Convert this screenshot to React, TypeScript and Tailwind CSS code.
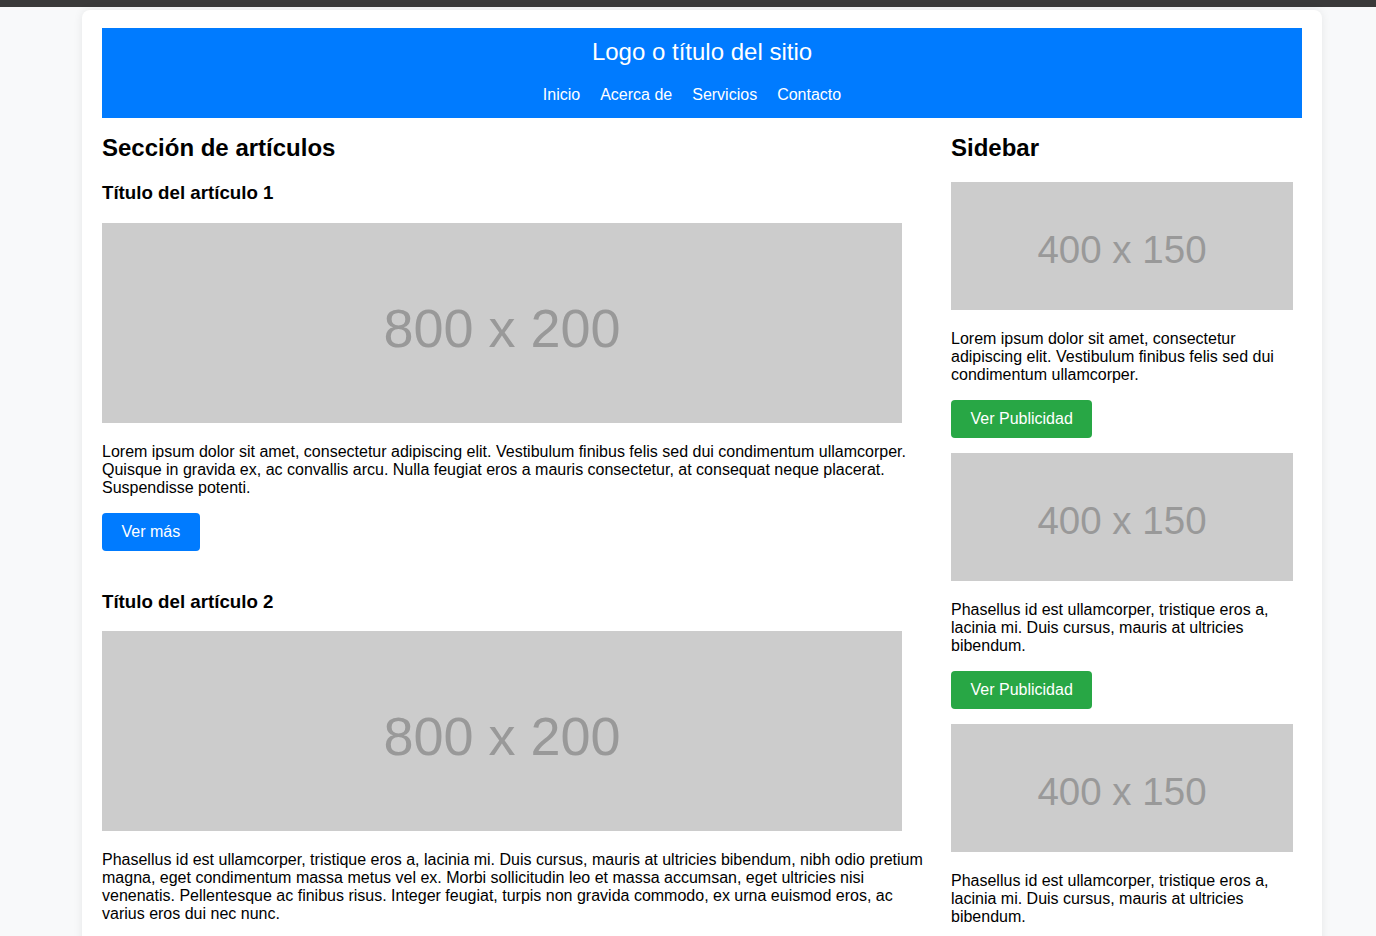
import React from "react";

function BigPh() {
  return (
    <div className="flex h-[200px] w-[800px] items-center justify-center bg-[#cccccc] text-[#999999]">
      <span className="pt-[10px] text-[54px] leading-none">800 x 200</span>
    </div>
  );
}

function SmallPh() {
  return (
    <div className="flex h-[128px] w-[342px] items-center justify-center bg-[#cccccc] text-[#999999]">
      <span className="pt-[8px] text-[38.5px] leading-none">400 x 150</span>
    </div>
  );
}

function Ad({ text, button = true }: { text: string; button?: boolean }) {
  return (
    <div>
      <SmallPh />
      <p className="mt-[20px] text-[16px] leading-[18px]">{text}</p>
      {button && (
        <button className="mt-4 rounded-[4px] bg-[#28a745] px-[19.5px] py-[10px] text-[16px] leading-[18px] text-white">
          Ver Publicidad
        </button>
      )}
    </div>
  );
}

export default function App() {
  const nav = ["Inicio", "Acerca de", "Servicios", "Contacto"];
  return (
    <div className="h-screen overflow-hidden bg-[#f8f9fa] font-['Liberation_Sans',Arial,sans-serif] text-black">
      <div className="h-[7px] bg-[#3a3a3a]" />
      <div className="ml-[82px] mt-[3px] w-[1240px] rounded-lg bg-white px-5 pt-[18px] pb-10 shadow-[0_0_10px_rgba(0,0,0,0.08)]">
        <header className="bg-[#007bff] pt-[10px] pb-[14px] text-center text-white">
          <h1 className="text-[24px] font-normal leading-[28px]">Logo o título del sitio</h1>
          <nav className="mt-5">
            <ul className="flex justify-center text-[16px] leading-[18px]">
              {nav.map((n) => (
                <li key={n} className="mr-5">
                  <a href="#">{n}</a>
                </li>
              ))}
            </ul>
          </nav>
        </header>

        <div className="mt-4 flex gap-[19px]">
          <main className="w-[830px]">
            <h2 className="text-[24px] font-bold leading-[28px]">Sección de artículos</h2>

            <article>
              <h3 className="mt-[20px] text-[18.72px] font-bold leading-[21px]">Título del artículo 1</h3>
              <div className="mt-[20px]">
                <BigPh />
              </div>
              <p className="mt-[20px] text-[16px] leading-[18px]">
                Lorem ipsum dolor sit amet, consectetur adipiscing elit. Vestibulum finibus felis sed dui condimentum ullamcorper. Quisque in gravida ex, ac convallis arcu. Nulla feugiat eros a mauris consectetur, at consequat neque placerat. Suspendisse potenti.
              </p>
              <button className="mt-[16px] rounded-[4px] bg-[#007bff] px-[19.5px] py-[10px] text-[16px] leading-[18px] text-white">
                Ver más
              </button>
            </article>

            <article>
              <h3 className="mt-[40px] text-[18.72px] font-bold leading-[21px]">Título del artículo 2</h3>
              <div className="mt-[19px]">
                <BigPh />
              </div>
              <p className="mt-[20px] text-[16px] leading-[18px]">
                Phasellus id est ullamcorper, tristique eros a, lacinia mi. Duis cursus, mauris at ultricies bibendum, nibh odio pretium magna, eget condimentum massa metus vel ex. Morbi sollicitudin leo et massa accumsan, eget ultricies nisi venenatis. Pellentesque ac finibus risus. Integer feugiat, turpis non gravida commodo, ex urna euismod eros, ac varius eros dui nec nunc.
              </p>
            </article>
          </main>

          <aside className="w-[342px]">
            <h2 className="text-[24px] font-bold leading-[28px]">Sidebar</h2>
            <div className="mt-[20px] flex flex-col gap-[15px]">
              <Ad text="Lorem ipsum dolor sit amet, consectetur adipiscing elit. Vestibulum finibus felis sed dui condimentum ullamcorper." />
              <Ad text="Phasellus id est ullamcorper, tristique eros a, lacinia mi. Duis cursus, mauris at ultricies bibendum." />
              <Ad button={false} text="Phasellus id est ullamcorper, tristique eros a, lacinia mi. Duis cursus, mauris at ultricies bibendum." />
            </div>
          </aside>
        </div>
      </div>
    </div>
  );
}
